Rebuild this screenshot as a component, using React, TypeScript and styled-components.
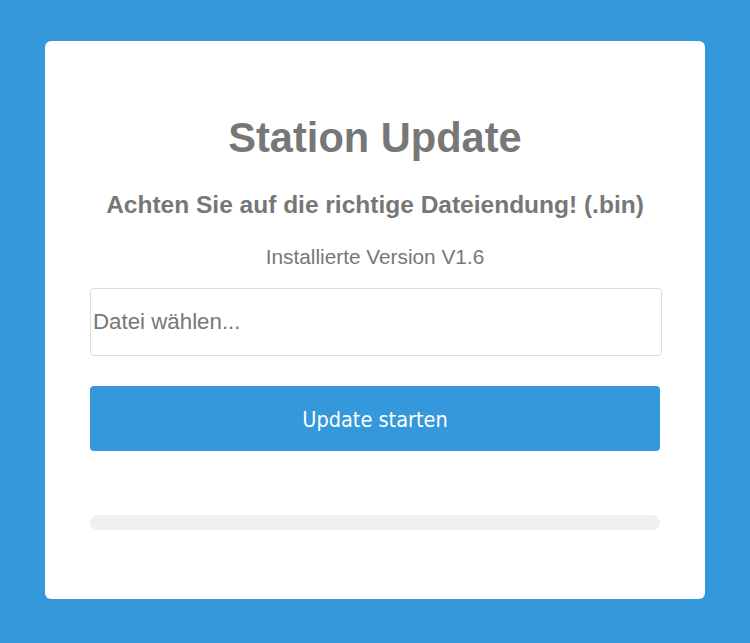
import React, { useState } from "react";
import styled, { createGlobalStyle } from "styled-components";

const GlobalStyle = createGlobalStyle`
  html, body {
    margin: 0;
    padding: 0;
    background-color: #3498db;
    font-family: "Liberation Sans", Arial, sans-serif;
  }
`;

const Page = styled.div`
  padding: 41px 45px 44px;
`;

const Card = styled.div`
  background-color: #fff;
  border-radius: 6px;
  padding: 73px 45px 69px;
  display: flex;
  flex-direction: column;
  align-items: stretch;
  text-align: center;
  color: #777;
`;

const Title = styled.h1`
  margin: 0;
  font-size: 41.6px;
  line-height: 47px;
  font-weight: bold;
`;

const Hint = styled.h3`
  margin: 30px 0 0;
  font-size: 24.5px;
  line-height: 28px;
  font-weight: bold;
`;

const Version = styled.p`
  margin: 26px 0 0;
  font-size: 20.8px;
  line-height: 23px;
`;

const FileField = styled.input`
  margin: 20px 0 0;
  width: calc(100% + 2px);
  height: 68px;
  box-sizing: border-box;
  padding: 0 2px 1px;
  border: 1px solid #ddd;
  border-radius: 4px;
  font-family: "Liberation Sans", Arial, sans-serif;
  font-size: 22.3px;
  color: #777;
  outline: none;

  &::placeholder {
    color: #777;
  }
`;

const StartButton = styled.button`
  margin: 30px 0 0;
  height: 65px;
  border: none;
  border-radius: 4px;
  background-color: #3498db;
  color: #fff;
  font-family: "DejaVu Sans Condensed", "DejaVu Sans", sans-serif;
  font-size: 21.5px;
  padding: 2px 0 0;
  cursor: pointer;
`;

const ProgressTrack = styled.div`
  margin-top: 64px;
  height: 15px;
  border-radius: 8px;
  background-color: #f0f0f0;
  overflow: hidden;
`;

const ProgressFill = styled.div`
  height: 100%;
  background-color: #3498db;
`;

const App: React.FC = () => {
  const [progress] = useState(0);

  return (
    <>
      <GlobalStyle />
      <Page>
        <Card>
          <Title>Station Update</Title>
          <Hint>Achten Sie auf die richtige Dateiendung! (.bin)</Hint>
          <Version>Installierte Version V1.6</Version>
          <FileField type="text" placeholder="Datei wählen..." readOnly />
          <StartButton>Update starten</StartButton>
          <ProgressTrack>
            <ProgressFill style={{ width: `${progress}%` }} />
          </ProgressTrack>
        </Card>
      </Page>
    </>
  );
};

export default App;
